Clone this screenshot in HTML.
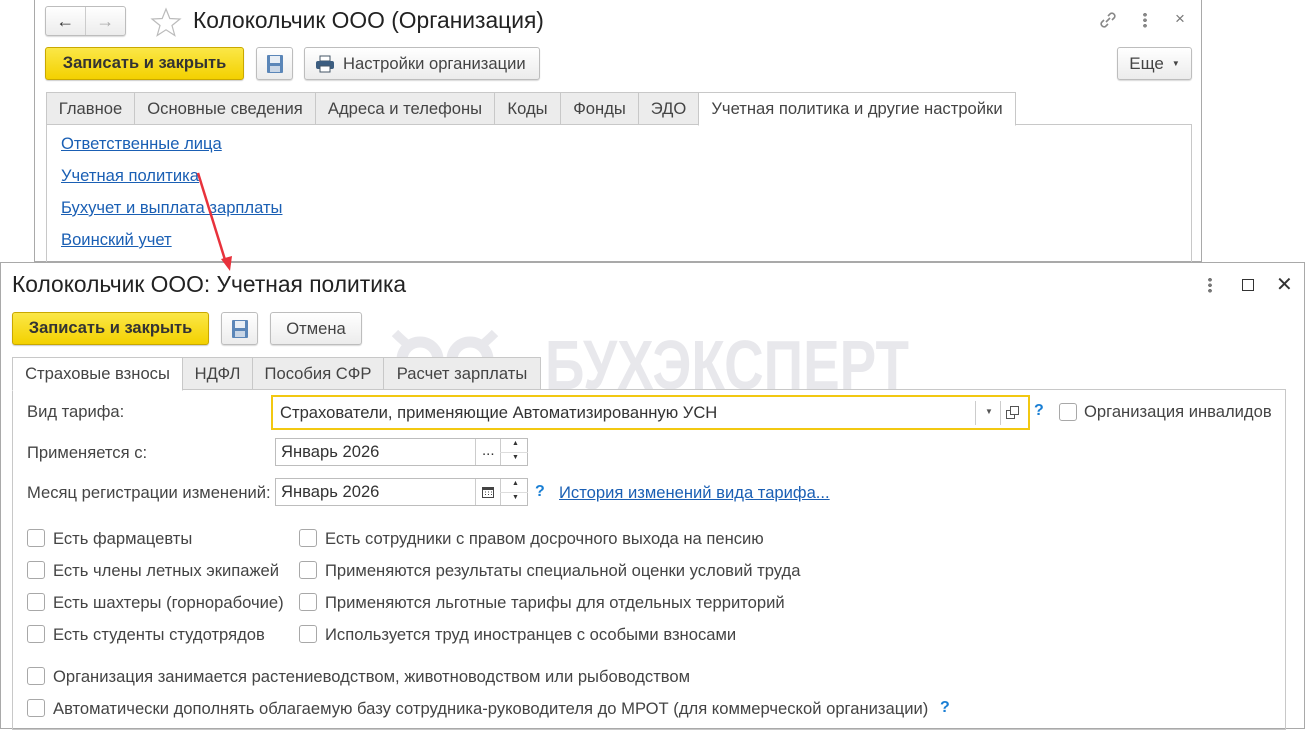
<!DOCTYPE html>
<html><head><meta charset="utf-8"><style>
*{box-sizing:border-box;margin:0;padding:0}
body{width:1305px;height:729px;position:relative;overflow:hidden;background:#fff;font-family:"Liberation Sans",Arial,sans-serif;font-size:16.6px;color:#333}
.a{position:absolute}
.btn{position:absolute;border:1px solid #bdbdbd;border-radius:3px;background:linear-gradient(#fff,#ececec);box-shadow:0 1px 1px rgba(0,0,0,.15);font-size:16.6px;color:#444;display:flex;align-items:center;justify-content:center;white-space:nowrap}
.ybtn{position:absolute;border:1px solid #c9a800;border-radius:3px;background:linear-gradient(#fbe747,#f3d100);font-weight:bold;font-size:16.5px;color:#333;display:flex;align-items:center;justify-content:center;box-shadow:0 1px 1px rgba(0,0,0,.2);white-space:nowrap}
.tab{position:absolute;height:33px;border:1px solid #c8c8c8;background:#ececec;font-size:16.6px;color:#444;display:flex;align-items:center;justify-content:center;white-space:nowrap}
.tab.on{background:#fff;border-bottom-color:#fff}
.lnk{position:absolute;color:#1a5fb4;text-decoration:underline;font-size:16.6px;white-space:nowrap}
.inp{position:absolute;border:1px solid #bdbdbd;background:#fff;font-size:16.6px;color:#333;padding-left:5px;display:flex;align-items:center;white-space:nowrap}
.cb{position:absolute;width:18px;height:18px;border:1px solid #a8a8a8;border-radius:3px;background:#fff}
.lbl{position:absolute;font-size:16.6px;color:#444;white-space:nowrap}
.q{position:absolute;color:#1a7fd4;font-weight:bold;font-size:16px}
</style></head><body>

<!-- upper window -->
<div class="a" style="left:34px;top:0;width:1168px;height:262px;border:1px solid #a9a9a9;border-top:none;background:#fff"></div>
<div class="btn" style="left:45px;top:6px;width:81px;height:30px;justify-content:flex-start">
 <div style="width:40px;height:100%;border-right:1px solid #ccc;display:flex;align-items:center;justify-content:center;font-size:18px;color:#333">&#x2190;</div>
 <div style="width:40px;text-align:center;font-size:18px;color:#aaa">&#x2192;</div>
</div>
<svg class="a" style="left:150px;top:7px" width="32" height="30" viewBox="0 0 32 30"><polygon points="16,2 19.8,11.5 30,12 22,18.5 24.8,28.5 16,22.8 7.2,28.5 10,18.5 2,12 12.2,11.5" fill="none" stroke="#bbb" stroke-width="1.2"/></svg>
<div class="a" style="left:193px;top:7px;font-size:22.8px;color:#222">Колокольчик ООО (Организация)</div>
<svg class="a" style="left:1097px;top:9px" width="22" height="22" viewBox="0 0 22 22"><path d="M9 13l4-4M7 11l-2.5 2.5a3 3 0 004 4L11 15M15 11l2.5-2.5a3 3 0 00-4-4L11 7" fill="none" stroke="#888" stroke-width="1.6"/></svg>
<div class="a" style="left:1143px;top:12px;width:4px;height:16px;background:radial-gradient(circle,#888 1.8px,transparent 2px) 0 0/4px 5.5px"></div>
<div class="a" style="left:1175px;top:9px;font-size:17px;color:#777">×</div>

<div class="ybtn" style="left:45px;top:47px;width:199px;height:33px">Записать и закрыть</div>
<div class="btn" style="left:256px;top:47px;width:37px;height:33px">
 <svg width="18" height="20" viewBox="0 0 18 20"><rect x="1" y="1" width="16" height="18" rx="1" fill="#5b86b8"/><rect x="4" y="2" width="10" height="7" fill="#e8eef5"/><rect x="4" y="12" width="10" height="6" fill="#c9d6e6"/></svg>
</div>
<div class="btn" style="left:304px;top:47px;width:236px;height:33px;justify-content:flex-start;padding-left:10px">
 <svg width="20" height="18" viewBox="0 0 20 18" style="margin-right:8px"><rect x="5" y="1" width="10" height="5" fill="#fff" stroke="#456" /><rect x="1" y="6" width="18" height="8" rx="2" fill="#3c5d80"/><rect x="5" y="11" width="10" height="6" fill="#fff" stroke="#456"/></svg>Настройки организации</div>
<div class="btn" style="left:1117px;top:47px;width:75px;height:33px;font-size:17px">Еще <span style="font-size:8px;margin-left:8px">▼</span></div>

<div class="a" style="left:46px;top:124px;width:1146px;height:140px;border:1px solid #c8c8c8;border-bottom:none"></div>
<div class="tab" style="left:46px;top:92px;width:89px">Главное</div>
<div class="tab" style="left:134px;top:92px;width:182px">Основные сведения</div>
<div class="tab" style="left:315px;top:92px;width:180px">Адреса и телефоны</div>
<div class="tab" style="left:494px;top:92px;width:67px">Коды</div>
<div class="tab" style="left:560px;top:92px;width:79px">Фонды</div>
<div class="tab" style="left:638px;top:92px;width:61px">ЭДО</div>
<div class="tab on" style="left:698px;top:92px;width:318px;height:34px">Учетная политика и другие настройки</div>
<div class="lnk" style="left:61px;top:134px">Ответственные лица</div>
<div class="lnk" style="left:61px;top:166px">Учетная политика</div>
<div class="lnk" style="left:61px;top:198px">Бухучет и выплата зарплаты</div>
<div class="lnk" style="left:61px;top:230px">Воинский учет</div>

<!-- lower window -->
<div class="a" style="left:0;top:262px;width:1305px;height:467px;border:1px solid #a9a9a9;background:#fff"></div>
<svg class="a" style="left:390px;top:328px" width="530" height="70" viewBox="0 0 530 70">
 <g fill="none" stroke="#e8e8ec" stroke-width="11"><circle cx="30" cy="32" r="18"/><circle cx="80" cy="32" r="18"/></g>
 <path d="M5 5 Q15 15 20 18 M105 5 Q95 15 90 18" stroke="#e8e8ec" stroke-width="9" fill="none"/>
 <text x="155" y="61" textLength="364" lengthAdjust="spacingAndGlyphs" font-family="Liberation Sans" font-weight="bold" font-size="70" fill="#e8e8ec">БУХЭКСПЕРТ</text>
</svg>
<div class="a" style="left:12px;top:271px;font-size:22.8px;color:#222">Колокольчик ООО: Учетная политика</div>
<div class="a" style="left:1208px;top:277px;width:4px;height:16px;background:radial-gradient(circle,#777 1.8px,transparent 2px) 0 0/4px 5.5px"></div>
<div class="a" style="left:1242px;top:279px;width:12px;height:12px;border:1.5px solid #333"></div>
<div class="a" style="left:1276px;top:272px;font-size:20px;color:#333">✕</div>

<div class="ybtn" style="left:12px;top:312px;width:197px;height:33px">Записать и закрыть</div>
<div class="btn" style="left:221px;top:312px;width:37px;height:33px">
 <svg width="18" height="20" viewBox="0 0 18 20"><rect x="1" y="1" width="16" height="18" rx="1" fill="#5b86b8"/><rect x="4" y="2" width="10" height="7" fill="#e8eef5"/><rect x="4" y="12" width="10" height="6" fill="#c9d6e6"/></svg>
</div>
<div class="btn" style="left:270px;top:312px;width:92px;height:33px">Отмена</div>

<div class="a" style="left:12px;top:389px;width:1274px;height:341px;border:1px solid #c8c8c8"></div>
<div class="tab on" style="left:12px;top:357px;width:171px;height:34px">Страховые взносы</div>
<div class="tab" style="left:182px;top:357px;width:71px">НДФЛ</div>
<div class="tab" style="left:252px;top:357px;width:132px">Пособия СФР</div>
<div class="tab" style="left:383px;top:357px;width:158px">Расчет зарплаты</div>

<div class="lbl" style="left:27px;top:402px">Вид тарифа:</div>
<div class="inp" style="left:271px;top:395px;width:759px;height:35px;border:2px solid #f2c811;padding-left:7px">Страхователи, применяющие Автоматизированную УСН
 <div class="a" style="left:702px;top:4px;height:24px;border-left:1px solid #ccc"></div>
 <div class="a" style="left:712px;top:10px;font-size:8px;color:#555">▼</div>
 <div class="a" style="left:727px;top:4px;height:24px;border-left:1px solid #ccc"></div>
 <svg class="a" style="left:733px;top:9px" width="13" height="13" viewBox="0 0 13 13"><rect x="4.5" y="0.5" width="8" height="8" fill="#fff" stroke="#555"/><path d="M4.5 4.5H0.5V12.5H8.5V8.5" fill="none" stroke="#555"/></svg>
</div>
<div class="q" style="left:1034px;top:402px">?</div>
<div class="cb" style="left:1059px;top:403px"></div>
<div class="lbl" style="left:1084px;top:402px">Организация инвалидов</div>

<div class="lbl" style="left:27px;top:443px">Применяется с:</div>
<div class="inp" style="left:275px;top:438px;width:253px;height:28px">Январь 2026
 <div class="a" style="left:199px;top:0;height:26px;border-left:1px solid #ccc"></div>
 <div class="a" style="left:206px;top:3px;font-size:15px">...</div>
 <div class="a" style="left:224px;top:0;height:26px;border-left:1px solid #ccc"></div>
 <div class="a" style="left:224px;top:13px;width:28px;border-top:1px solid #ddd"></div>
 <div class="a" style="left:236px;top:1px;font-size:7px">▲</div><div class="a" style="left:236px;top:15px;font-size:7px">▼</div>
</div>

<div class="lbl" style="left:27px;top:483px">Месяц регистрации изменений:</div>
<div class="inp" style="left:275px;top:478px;width:253px;height:28px">Январь 2026
 <div class="a" style="left:199px;top:0;height:26px;border-left:1px solid #ccc"></div>
 <svg class="a" style="left:206px;top:7px" width="12" height="12" viewBox="0 0 12 12"><rect x="0.5" y="1.5" width="11" height="10" fill="none" stroke="#444"/><rect x="0.5" y="1.5" width="11" height="2.5" fill="#444"/><path d="M3 6h1M6 6h1M9 6h1M3 8.5h1M6 8.5h1M9 8.5h1" stroke="#444"/></svg>
 <div class="a" style="left:224px;top:0;height:26px;border-left:1px solid #ccc"></div>
 <div class="a" style="left:224px;top:13px;width:28px;border-top:1px solid #ddd"></div>
 <div class="a" style="left:236px;top:1px;font-size:7px">▲</div><div class="a" style="left:236px;top:15px;font-size:7px">▼</div>
</div>
<div class="q" style="left:535px;top:483px">?</div>
<div class="lnk" style="left:559px;top:483px">История изменений вида тарифа...</div>

<div class="cb" style="left:27px;top:529px"></div><div class="lbl" style="left:53px;top:529px">Есть фармацевты</div>
<div class="cb" style="left:27px;top:561px"></div><div class="lbl" style="left:53px;top:561px">Есть члены летных экипажей</div>
<div class="cb" style="left:27px;top:593px"></div><div class="lbl" style="left:53px;top:593px">Есть шахтеры (горнорабочие)</div>
<div class="cb" style="left:27px;top:625px"></div><div class="lbl" style="left:53px;top:625px">Есть студенты студотрядов</div>
<div class="cb" style="left:299px;top:529px"></div><div class="lbl" style="left:325px;top:529px">Есть сотрудники с правом досрочного выхода на пенсию</div>
<div class="cb" style="left:299px;top:561px"></div><div class="lbl" style="left:325px;top:561px">Применяются результаты специальной оценки условий труда</div>
<div class="cb" style="left:299px;top:593px"></div><div class="lbl" style="left:325px;top:593px">Применяются льготные тарифы для отдельных территорий</div>
<div class="cb" style="left:299px;top:625px"></div><div class="lbl" style="left:325px;top:625px">Используется труд иностранцев с особыми взносами</div>
<div class="cb" style="left:27px;top:667px"></div><div class="lbl" style="left:53px;top:667px">Организация занимается растениеводством, животноводством или рыбоводством</div>
<div class="cb" style="left:27px;top:699px"></div><div class="lbl" style="left:53px;top:699px">Автоматически дополнять облагаемую базу сотрудника-руководителя до МРОТ (для коммерческой организации)</div>
<div class="q" style="left:940px;top:699px">?</div>

<!-- red arrow -->
<svg class="a" style="left:190px;top:165px" width="50" height="110" viewBox="0 0 50 110"><line x1="8" y1="8" x2="36" y2="98" stroke="#e8323c" stroke-width="2.5"/><polygon points="31,94 40,106 42,91" fill="#e8323c"/></svg>
</body></html>
